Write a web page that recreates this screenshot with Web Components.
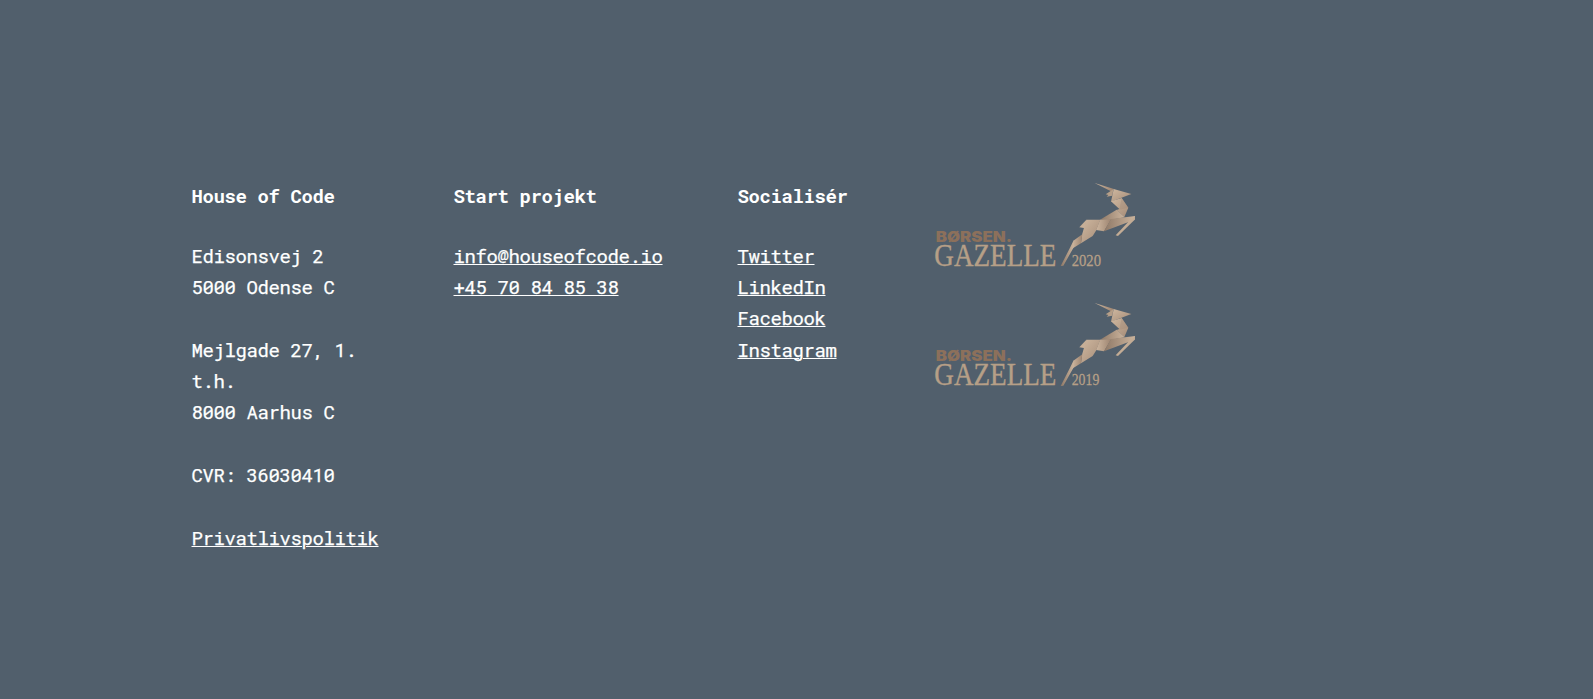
<!DOCTYPE html>
<html lang="da">
<head>
<meta charset="utf-8">
<title>House of Code</title>
<style>
html,body{margin:0;background:#515f6c}
body{min-height:699px;overflow:hidden}
</style>
</head>
<body>
<site-footer></site-footer>
<script>
const define = (name, html, setup) => customElements.define(name, class extends HTMLElement {
  constructor() {
    super();
    const t = document.createElement('template');
    t.innerHTML = html;
    this.attachShadow({mode: 'open'}).append(t.content.cloneNode(true));
  }
  connectedCallback() { if (setup) setup(this); }
});

define('footer-link', `
<style>:host{display:inline}a{color:inherit;text-decoration:underline;text-decoration-thickness:1px;text-underline-offset:1px}</style>
<a href="#"><slot></slot></a>`);

define('footer-column', `
<style>
:host{display:block}
h2{margin:0 0 29px;font-size:inherit;line-height:31px;font-weight:700}
div{line-height:31.2px;-webkit-text-stroke:.25px #fff}
</style>
<h2><slot name="title"></slot></h2><div><slot></slot></div>`);

define('gazelle-award', `
<style>:host{display:block;width:230px;height:110px}svg{display:block}</style>
<svg width="230" height="110" viewBox="0 0 690 330">
<defs>
<linearGradient id="a" x1="0" x2="1" y1="0" y2="1"><stop stop-color="#cfb8a0"/><stop offset="1" stop-color="#a58c78"/></linearGradient>
<linearGradient id="b" x1="0" x2="1"><stop stop-color="#8f7967"/><stop offset="1" stop-color="#cbb49d"/></linearGradient>
<linearGradient id="c" x1="0" x2="1"><stop stop-color="#cdb69f"/><stop offset="1" stop-color="#9d8470"/></linearGradient>
</defs>
<g id="words">
<text x="47" y="215" font-family="Inter" font-weight="900" font-size="44" textLength="229" lengthAdjust="spacingAndGlyphs" fill="#8c705b">BØRSEN.</text>
<text x="43" y="287" font-family="Liberation Serif" font-size="94" textLength="366" lengthAdjust="spacingAndGlyphs" fill="#b69f87" stroke="#b69f87" stroke-width="1.2">GAZELLE</text>
<text id="year" x="455" y="288" font-family="Liberation Serif" font-size="48" textLength="88" lengthAdjust="spacingAndGlyphs" fill="#b69f87" stroke="#b69f87" stroke-width=".8"></text>
</g>
<path fill="url(#c)" d="M524 39L582 57 576 65Z"/>
<path fill="#b59e88" d="M580 58L557 73 565 75 560 80 577 77Z"/>
<path fill="url(#a)" d="M581 57L634 72 573 95 578 72Z"/>
<path fill="url(#a)" d="M573 94L605 84 625 113 613 141 590 120 598 117Z"/>
<path fill="#a08a77" d="M605 84L625 113 598 119Z" opacity=".35"/>
<path fill="url(#b)" d="M590 119L614 142 573 149 540 149Z"/>
<path fill="url(#c)" d="M540 149L574 147 552 184 528 180Z"/>
<path fill="url(#b)" d="M573 147L645 138 644 149 552 184Z"/>
<path fill="#c3ac95" d="M645 142L644 149 594 198 587 196 630 150Z"/>
<path fill="#c7af97" d="M499 149L478 172 496 175Z"/>
<path fill="url(#a)" d="M499 149L541 149 528 182 518 198 483 220 486 194Z"/>
<path fill="url(#c)" d="M487 193L483 220 456 236 460 212Z"/>
<path fill="url(#b)" d="M461 211L460 234 430 287 422 288 450 233Z"/>
</svg>`, el => {
  const year = el.getAttribute('year'), s = el.shadowRoot, t = s.querySelector('#year');
  t.textContent = year;
  if (year === '2019') {
    t.setAttribute('textLength', '83');
    s.querySelector('#words').setAttribute('transform', 'translate(0 -3)');
  }
});

define('site-footer', `
<style>
:host{display:grid;grid-template-columns:262px 284px 182px 230px;box-sizing:border-box;height:699px;padding:170px 0 0 191.5px;color:#fff;font:400 19px "Roboto Mono","DejaVu Sans Mono",monospace;letter-spacing:-.4px}
gazelle-award{letter-spacing:0}
.first{padding-right:54px}
footer-column{padding-top:10px}
p{margin:0 0 31.6px}
.awards{display:flex;flex-direction:column;gap:10px}
.social footer-link{display:block}
</style>
<footer-column class="first"><span slot="title">House of Code</span>
<p>Edisonsvej 2<br>5000 Odense C</p><p>Mejlgade 27, 1. t.h.<br>8000 Aarhus C</p><p>CVR: 36030410</p><footer-link>Privatlivspolitik</footer-link></footer-column>
<footer-column><span slot="title">Start projekt</span><footer-link>info@houseofcode.io</footer-link><br><footer-link>+45 70 84 85 38</footer-link></footer-column>
<footer-column class="social"><span slot="title">Socialisér</span><footer-link>Twitter</footer-link><footer-link>LinkedIn</footer-link><footer-link>Facebook</footer-link><footer-link>Instagram</footer-link></footer-column>
<div class="awards"><gazelle-award year="2020"></gazelle-award><gazelle-award year="2019"></gazelle-award></div>`);
</script>
</body>
</html>
